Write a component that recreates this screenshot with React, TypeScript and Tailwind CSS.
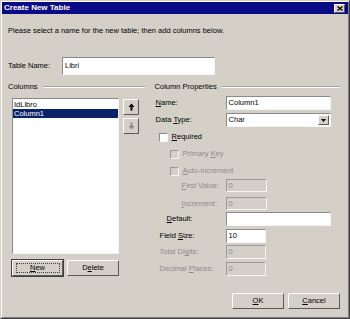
import React from 'react';

const sunken = 'bg-white border border-t-[#8a8a8a] border-l-[#8a8a8a] border-b-[#f4f4f4] border-r-[#f4f4f4]';
const sunkenOff = 'bg-[#d4d0c8] border border-t-[#9a9a9a] border-l-[#9a9a9a] border-b-[#f4f4f4] border-r-[#f4f4f4]';
const raised = 'bg-[#d4d0c8] border border-t-white border-l-white border-b-[#5a5a5a] border-r-[#5a5a5a]';

function GroupHeader({ title }: { title: string }) {
  return (
    <div className="flex items-center h-[10px]">
      <span>{title}</span>
      <div className="flex-1 ml-[5px] border-t border-t-[#a0a0a0] border-b border-b-white" />
    </div>
  );
}

function Check({ label, disabled }: { label: React.ReactNode; disabled?: boolean }) {
  return (
    <div className={`flex items-center h-full ${disabled ? 'text-[#8c8c8c]' : ''}`}>
      <div className={`w-[9px] h-[9px] ${disabled ? sunkenOff : sunken}`} />
      <span className="ml-[4px]">{label}</span>
    </div>
  );
}

function Field({
  label,
  pl,
  value,
  w,
  h = 'h-[14px]',
  mt,
  disabled,
}: {
  label: React.ReactNode;
  pl: string;
  value?: string;
  w: string;
  h?: string;
  mt: string;
  disabled?: boolean;
}) {
  return (
    <div className={`flex items-center ${h} ${mt}`}>
      <div className={`w-[71px] ${pl} ${disabled ? 'text-[#8c8c8c]' : ''}`}>{label}</div>
      <div className={`${w} h-full flex items-center px-[2px] ${disabled ? sunkenOff + ' text-[#8c8c8c]' : sunken}`}>
        {value}
      </div>
    </div>
  );
}

function Button({ children, w, focus }: { children: React.ReactNode; w: string; focus?: boolean }) {
  return (
    <div className={`${w} h-[16px] ${raised} flex items-center justify-center ${focus ? 'outline outline-1 outline-[#404040]' : ''}`}>
      {focus ? (
        <span className="border border-dotted border-[#404040] w-[44px] h-[10px] flex items-center justify-center">{children}</span>
      ) : (
        children
      )}
    </div>
  );
}

export default function App() {
  return (
    <div className="w-[350px] h-[319px] bg-[#d4d0c8] border border-t-[#d4d0c8] border-l-[#d4d0c8] border-r-[#404040] border-b-[#404040] font-['Liberation_Sans',Arial,sans-serif] text-[7.5px] text-black overflow-hidden">
      <div className="h-full border border-t-white border-l-white border-r-[#808080] border-b-[#808080] flex flex-col">
        {/* title bar */}
        <div className="h-[12px] bg-[#0a0a86] flex items-center justify-between pl-[2px] pr-[3px]">
          <span className="text-white font-bold text-[8px] leading-[12px]">Create New Table</span>
          <div className={`w-[11px] h-[9px] ${raised} flex items-center justify-center`}>
            <svg width="6" height="5" viewBox="0 0 6 5">
              <path d="M0.5 0.5 L5.5 4.5 M5.5 0.5 L0.5 4.5" stroke="#000" strokeWidth="1.3" />
            </svg>
          </div>
        </div>

        <div className="pl-[6px] pr-[8px]">
          <div className="mt-[12px] leading-[10px]">
            Please select a name for the new table; then add columns below.
          </div>

          <div className="mt-[21px] h-[18px] flex items-center">
            <div className="w-[54px]">Table Name:</div>
            <div className={`w-[153px] h-full flex items-center px-[2px] ${sunken}`}>Libri</div>
          </div>

          <div className="mt-[7px] flex">
            {/* left column */}
            <div className="w-[137px]">
              <GroupHeader title="Columns" />
              <div className="mt-[6px] flex pl-[4px]">
                <div className={`w-[107px] h-[156px] ${sunken} pt-[1px] leading-[9px]`}>
                  <div className="h-[9px] px-[1px]">IdLibro</div>
                  <div className="h-[9px] px-[1px] bg-[#0a246a] text-white">Column1</div>
                </div>
                <div className="ml-[4px] mt-[1px] flex flex-col gap-[3px]">
                  <div className={`w-[16px] h-[16px] ${raised} flex items-center justify-center`}>
                    <svg width="7" height="8" viewBox="0 0 7 8">
                      <path d="M3.5 0.5 L6.5 4 H4.5 V7.5 H2.5 V4 H0.5 Z" fill="#000" />
                    </svg>
                  </div>
                  <div className={`w-[16px] h-[16px] ${raised} flex items-center justify-center`}>
                    <svg width="7" height="8" viewBox="0 0 7 8">
                      <path d="M3.5 7.5 L6.5 4 H4.5 V0.5 H2.5 V4 H0.5 Z" fill="#8a8a8a" />
                    </svg>
                  </div>
                </div>
              </div>
              <div className="mt-[6px] flex pl-[4px] gap-[4px]">
                <Button w="w-[51px]" focus>
                  <span><u>N</u>ew</span>
                </Button>
                <Button w="w-[52px]">
                  <span>D<u>e</u>lete</span>
                </Button>
              </div>
            </div>

            {/* right column */}
            <div className="ml-[10px] w-[186px]">
              <GroupHeader title="Column Properties" />
              <Field label={<span><u>N</u>ame:</span>} pl="pl-[1px]" value="Column1" w="w-[105px]" mt="mt-[4px]" />
              <div className="flex items-center h-[14px] mt-[3px]">
                <div className="w-[71px] pl-[1px]">Data <u>T</u>ype:</div>
                <div className={`w-[105px] h-full flex items-center justify-between pl-[2px] pr-[1px] ${sunken}`}>
                  <span>Char</span>
                  <div className={`w-[11px] h-[10px] ${raised} flex items-center justify-center`}>
                    <svg width="5" height="3" viewBox="0 0 5 3">
                      <path d="M0 0 H5 L2.5 3 Z" fill="#000" />
                    </svg>
                  </div>
                </div>
              </div>
              <div className="h-[14px] mt-[3px] pl-[4px]">
                <Check label={<span><u>R</u>equired</span>} />
              </div>
              <div className="h-[14px] mt-[3px] pl-[15px]">
                <Check label={<span>Primary <u>K</u>ey</span>} disabled />
              </div>
              <div className="h-[12px] mt-[4px] pl-[15px]">
                <Check label={<span><u>A</u>uto-increment</span>} disabled />
              </div>
              <Field label={<span><u>F</u>irst Value:</span>} pl="pl-[27px]" value="0" w="w-[41px]" h="h-[13px]" mt="mt-[2px]" disabled />
              <Field label={<span><u>I</u>ncrement:</span>} pl="pl-[27px]" value="0" w="w-[41px]" h="h-[13px]" mt="mt-[5px]" disabled />
              <Field label={<span><u>D</u>efault:</span>} pl="pl-[12px]" value="" w="w-[105px]" mt="mt-[2px]" />
              <Field label={<span>Field <u>S</u>ize:</span>} pl="pl-[5px]" value="10" w="w-[40px]" mt="mt-[3px]" />
              <Field label={<span>Total Di<u>g</u>its:</span>} pl="pl-[5px]" value="0" w="w-[40px]" mt="mt-[2px]" disabled />
              <Field label={<span>Decimal <u>P</u>laces:</span>} pl="pl-[5px]" value="0" w="w-[40px]" mt="mt-[3px]" disabled />
            </div>
          </div>

          <div className="mt-[17px] flex justify-end gap-[4px]">
            <Button w="w-[52px]">
              <span><u>O</u>K</span>
            </Button>
            <Button w="w-[52px]">
              <span><u>C</u>ancel</span>
            </Button>
          </div>
        </div>
      </div>
    </div>
  );
}
